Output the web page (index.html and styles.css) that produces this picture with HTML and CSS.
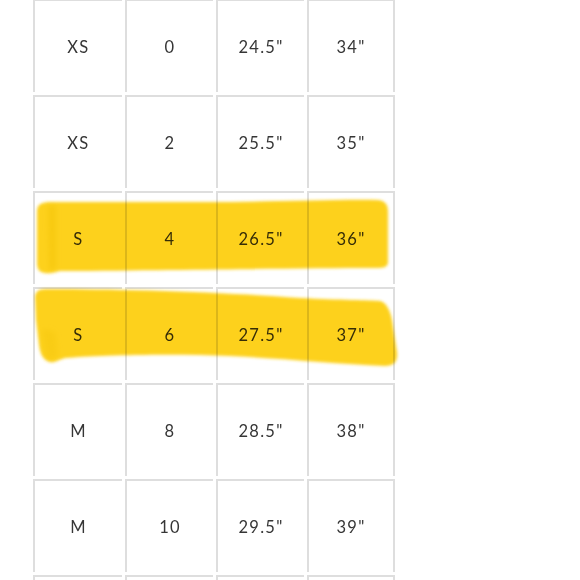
FILE: index.html
```html
<!DOCTYPE html>
<html lang="en">
<head>
<meta charset="utf-8">
<title>Size chart</title>
<link rel="stylesheet" href="styles.css">
</head>
<body>
<main class="page">
  <div class="size-table">
    <div class="cell">XS</div><div class="cell">0</div><div class="cell">24.5"</div><div class="cell last">34"</div>
    <div class="cell">XS</div><div class="cell">2</div><div class="cell">25.5"</div><div class="cell last">35"</div>
    <div class="cell">S</div><div class="cell">4</div><div class="cell">26.5"</div><div class="cell last">36"</div>
    <div class="cell">S</div><div class="cell">6</div><div class="cell">27.5"</div><div class="cell last">37"</div>
    <div class="cell">M</div><div class="cell">8</div><div class="cell">28.5"</div><div class="cell last">38"</div>
    <div class="cell">M</div><div class="cell">10</div><div class="cell">29.5"</div><div class="cell last">39"</div>
    <div class="cell"></div><div class="cell"></div><div class="cell"></div><div class="cell last"></div>
  </div>
  <svg class="highlight" width="580" height="580" viewBox="0 0 580 580" aria-hidden="true">
    <defs>
      <filter id="soft" x="-5%" y="-20%" width="110%" height="140%">
        <feGaussianBlur stdDeviation="1.5"/>
      </filter>
      <filter id="softer" x="-50%" y="-20%" width="200%" height="140%">
        <feGaussianBlur stdDeviation="2.5"/>
      </filter>
    </defs>
    <g filter="url(#soft)">
      <path class="ink" d="M37 212 C37 205 40 203 48 202 L200 202 C280 202 340 199 378 200 C386 201 388 205 388 212 L388 262 C388 267 384 268 376 268 C300 268 200 270 60 271 C55 272 50 274 45 273 C38 272 37 268 37 262 Z"/>
      <path class="ink" d="M35 298 C35 292 38 289 46 289 C120 289 220 292 300 298 C340 300 370 300 380 301 C386 302 390 310 392 320 L397 352 C398 362 394 366 385 366 C330 364 260 356 200 355 C140 354 90 356 65 358 C58 360 55 363 50 362 C42 360 40 352 39 345 L36 320 Z"/>
    </g>
    <g filter="url(#softer)">
      <path class="ink-dark" d="M48 206 C52 205 55 205 56 207 L56 266 C55 270 52 271 49 270 Z"/>
      <path class="ink-dark faint" d="M42 330 C46 328 52 330 56 334 L58 356 C55 360 50 361 46 358 Z"/>
    </g>
  </svg>
</main>
</body>
</html>
```
FILE: styles.css
```css
html, body {
  margin: 0;
  padding: 0;
  background: #ffffff;
}

.page {
  position: relative;
  width: 580px;
  height: 580px;
  overflow: hidden;
}

.size-table {
  display: grid;
  grid-template-columns: 89px 88px 88px 88px;
  grid-auto-rows: 93px;
  column-gap: 3px;
  row-gap: 3px;
  margin: -1px 0 0 33px;
  width: max-content;
}

.cell {
  display: flex;
  align-items: center;
  justify-content: center;
  border-top: 2px solid #dedede;
  border-left: 2px solid #dedede;
  font-family: Lato, "Open Sans", sans-serif;
  font-size: 16.5px;
  letter-spacing: 1.3px;
  color: #363636;
}

.cell.last {
  border-right: 2px solid #dedede;
}

.highlight {
  position: absolute;
  top: 0;
  left: 0;
  pointer-events: none;
  mix-blend-mode: multiply;
}

.ink {
  fill: #fdd11a;
}

.ink-dark {
  fill: #f0be00;
  opacity: 0.4;
}

.ink-dark.faint {
  opacity: 0.25;
}
```
